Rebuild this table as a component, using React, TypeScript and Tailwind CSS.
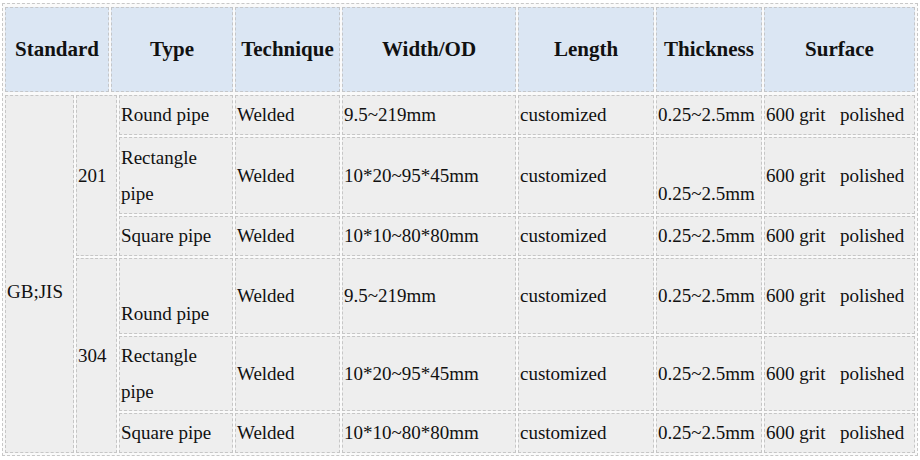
import React from "react";

const headCell =
  "box-border flex h-full items-center justify-center border border-dashed border-[#c4c6c9] bg-[#dbe6f3] font-['Liberation_Serif','Times_New_Roman',serif] text-[21px] font-bold text-[#111]";
const bodyCell =
  "box-border flex h-full items-center border border-dashed border-[#c6c6c6] bg-[#eeeeee] pl-[1px] font-['Liberation_Serif','Times_New_Roman',serif] text-[19px] leading-[36px] text-[#111]";

const colW = ["w-[114px]", "w-[105px]", "w-[174px]", "w-[136px]", "w-[106px]", "w-[151px]"];

type Row = { h: string; cells: string[][] };

const group1: Row[] = [
  {
    h: "h-[40px]",
    cells: [["Round pipe"], ["Welded"], ["9.5~219mm"], ["customized"], ["0.25~2.5mm"], ["600 grit\u00a0\u00a0 polished"]],
  },
  {
    h: "h-[77px]",
    cells: [
      ["Rectangle", "pipe"],
      ["Welded"],
      ["10*20~95*45mm"],
      ["customized"],
      ["", "0.25~2.5mm"],
      ["600 grit\u00a0\u00a0 polished"],
    ],
  },
  {
    h: "h-[40px]",
    cells: [["Square pipe"], ["Welded"], ["10*10~80*80mm"], ["customized"], ["0.25~2.5mm"], ["600 grit\u00a0\u00a0 polished"]],
  },
];

const group2: Row[] = [
  {
    h: "h-[76px]",
    cells: [["", "Round pipe"], ["Welded"], ["9.5~219mm"], ["customized"], ["0.25~2.5mm"], ["600 grit\u00a0\u00a0 polished"]],
  },
  {
    h: "h-[75px]",
    cells: [
      ["Rectangle", "pipe"],
      ["Welded"],
      ["10*20~95*45mm"],
      ["customized"],
      ["0.25~2.5mm"],
      ["600 grit\u00a0\u00a0 polished"],
    ],
  },
  {
    h: "h-[40px]",
    cells: [["Square pipe"], ["Welded"], ["10*10~80*80mm"], ["customized"], ["0.25~2.5mm"], ["600 grit\u00a0\u00a0 polished"]],
  },
];

function Lines({ lines }: { lines: string[] }) {
  return (
    <div className="flex flex-col whitespace-pre">
      {lines.map((l, i) => (
        <div key={i} className="h-[36px]">
          {l}
        </div>
      ))}
    </div>
  );
}

function Group({ grade, rows, h }: { grade: string; rows: Row[]; h: string }) {
  return (
    <div className={`flex gap-[2px] ${h}`}>
      <div className={`${bodyCell} w-[41px]`}>
        <Lines lines={[grade]} />
      </div>
      <div className="flex flex-col gap-[2px]">
        {rows.map((r, ri) => (
          <div key={ri} className={`flex gap-[2px] ${r.h}`}>
            {r.cells.map((c, ci) => (
              <div key={ci} className={`${bodyCell} ${colW[ci]}`}>
                <Lines lines={c} />
              </div>
            ))}
          </div>
        ))}
      </div>
    </div>
  );
}

export default function App() {
  return (
    <div className="h-[460px] w-[920px] bg-white pl-[2px] pt-[3px] font-['Liberation_Serif',serif]">
      <div className="box-border flex h-[453px] w-[916px] flex-col gap-[3px] border border-dashed border-[#c8c8c8] bg-[#fafafa] pb-[2px] pl-[2px] pr-[2px] pt-[3px]">
        <div className="flex h-[85px] gap-[2px]">
          <div className={`${headCell} w-[104px]`}>Standard</div>
          <div className={`${headCell} w-[122px]`}>Type</div>
          <div className={`${headCell} w-[105px]`}>Technique</div>
          <div className={`${headCell} w-[174px]`}>Width/OD</div>
          <div className={`${headCell} w-[136px]`}>Length</div>
          <div className={`${headCell} w-[106px]`}>Thickness</div>
          <div className={`${headCell} w-[151px]`}>Surface</div>
        </div>
        <div className="flex h-[358px] gap-[2px]">
          <div className={`${bodyCell} w-[69px]`}>
            <Lines lines={["", "GB;JIS"]} />
          </div>
          <div className="flex flex-col gap-[2px]">
            <Group grade="201" rows={group1} h="h-[161px]" />
            <Group grade="304" rows={group2} h="h-[195px]" />
          </div>
        </div>
      </div>
    </div>
  );
}
